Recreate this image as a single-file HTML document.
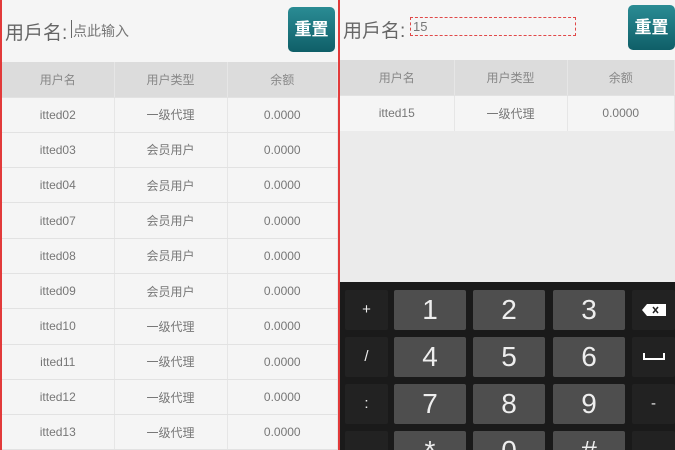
<!DOCTYPE html><html><head><meta charset="utf-8"><style>
*{margin:0;padding:0;box-sizing:border-box}
body{width:675px;height:450px;overflow:hidden;background:#f5f5f5;font-family:"Liberation Sans","Noto Sans CJK SC",sans-serif;position:relative}
.p{position:absolute;top:0;height:450px;background:#f5f5f5;overflow:hidden}
.lbl{position:absolute;font-size:19px;color:#666}
.btn{position:absolute;width:47px;height:45px;border-radius:5px;background:linear-gradient(#2a8c94,#0f5f68);color:#fff;font-size:17px;font-weight:bold;text-align:center;line-height:45px}
table{position:absolute;left:0;border-collapse:collapse;width:100%;table-layout:fixed}
td,th{font-size:12px;color:#777;font-weight:normal;text-align:center;border-right:1px solid #e6e6e6;border-bottom:1px solid #e2e2e2;background:#f5f5f5}
th{background:#dcdcdc;color:#888}
.k{position:absolute;height:40px;border-radius:2px;color:#eee;text-align:center}
.n{background:#4e4e4e;font-size:28px;line-height:40px}
.f{background:#222;font-size:15px;line-height:40px}
</style></head><body>
<div class="p" style="left:0;width:338px;border-left:2px solid #e23a3a">
<div class="lbl" style="left:3px;top:18px">用戶名:</div>
<div style="position:absolute;left:69px;top:20px;width:1px;height:18px;background:#666"></div>
<div style="position:absolute;left:71px;top:21px;font-size:14px;color:#777">点此输入</div>
<div class="btn" style="left:286px;top:7px">重置</div>
<table style="top:62px"><colgroup><col style="width:112px"><col style="width:113px"><col></colgroup>
<tr style="height:35px"><th>用户名</th><th>用户类型</th><th>余额</th></tr>
<tr style="height:35.3px"><td>itted02</td><td>一级代理</td><td>0.0000</td></tr>
<tr style="height:35.3px"><td>itted03</td><td>会员用户</td><td>0.0000</td></tr>
<tr style="height:35.3px"><td>itted04</td><td>会员用户</td><td>0.0000</td></tr>
<tr style="height:35.3px"><td>itted07</td><td>会员用户</td><td>0.0000</td></tr>
<tr style="height:35.3px"><td>itted08</td><td>会员用户</td><td>0.0000</td></tr>
<tr style="height:35.3px"><td>itted09</td><td>会员用户</td><td>0.0000</td></tr>
<tr style="height:35.3px"><td>itted10</td><td>一级代理</td><td>0.0000</td></tr>
<tr style="height:35.3px"><td>itted11</td><td>一级代理</td><td>0.0000</td></tr>
<tr style="height:35.3px"><td>itted12</td><td>一级代理</td><td>0.0000</td></tr>
<tr style="height:35.3px"><td>itted13</td><td>一级代理</td><td>0.0000</td></tr>
</table></div>
<div style="position:absolute;left:338px;top:0;width:2px;height:450px;background:#e23a3a"></div>
<div class="p" style="left:340px;width:335px">
<div class="lbl" style="left:3px;top:16px">用戶名:</div>
<div style="position:absolute;left:70px;top:17px;width:166px;height:19px;border:1px dashed #e04848;font-size:13px;color:#777;padding-left:2px;line-height:17px">15</div>
<div class="btn" style="left:288px;top:5px">重置</div>
<table style="top:60px;width:335px"><colgroup><col style="width:114px"><col style="width:113px"><col></colgroup>
<tr style="height:35px"><th>用户名</th><th>用户类型</th><th>余额</th></tr>
<tr style="height:36px"><td>itted15</td><td>一级代理</td><td>0.0000</td></tr>
</table>
<div style="position:absolute;left:0;top:131px;width:335px;height:151px;background:#ebebeb"></div>
<div style="position:absolute;left:0;top:282px;width:335px;height:168px;background:#1a1a1a">
<div class="k f" style="left:5px;top:8px;width:43px">+</div>
<div class="k f" style="left:5px;top:55px;width:43px">/</div>
<div class="k f" style="left:5px;top:102px;width:43px">:</div>
<div class="k f" style="left:5px;top:149px;width:43px"></div>
<div class="k n" style="left:54px;top:8px;width:72px">1</div>
<div class="k n" style="left:133px;top:8px;width:72px">2</div>
<div class="k n" style="left:213px;top:8px;width:72px">3</div>
<div class="k n" style="left:54px;top:55px;width:72px">4</div>
<div class="k n" style="left:133px;top:55px;width:72px">5</div>
<div class="k n" style="left:213px;top:55px;width:72px">6</div>
<div class="k n" style="left:54px;top:102px;width:72px">7</div>
<div class="k n" style="left:133px;top:102px;width:72px">8</div>
<div class="k n" style="left:213px;top:102px;width:72px">9</div>
<div class="k n" style="left:54px;top:149px;width:72px">*</div>
<div class="k n" style="left:133px;top:149px;width:72px">0</div>
<div class="k n" style="left:213px;top:149px;width:72px">#</div>
<div class="k f" style="left:292px;top:8px;width:43px"><svg width="24" height="12" style="margin-top:14px"><path d="M5 0H24V12H5L0 6Z" fill="#fff"/><path d="M11 3L16 9M16 3L11 9" stroke="#222" stroke-width="1.5"/></svg></div>
<div class="k f" style="left:292px;top:55px;width:43px"><svg width="22" height="8" style="margin-top:16px"><path d="M1 0V6H21V0" stroke="#fff" stroke-width="2" fill="none"/></svg></div>
<div class="k f" style="left:292px;top:102px;width:43px">-</div>
<div class="k f" style="left:292px;top:149px;width:43px"></div>
</div>
</div>
</body></html>
